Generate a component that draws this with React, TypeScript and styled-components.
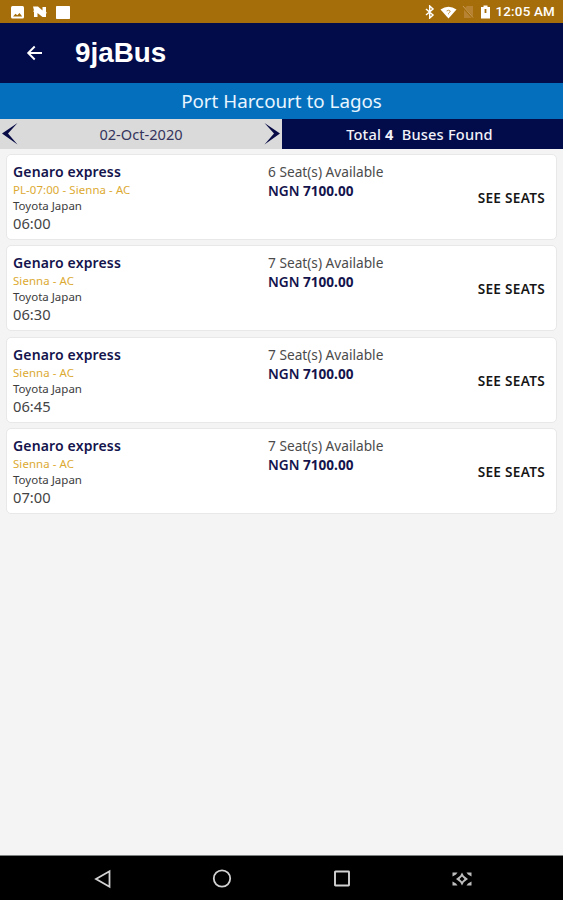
import styled, { createGlobalStyle } from 'styled-components';

const GlobalStyle = createGlobalStyle`
  * {
    box-sizing: border-box;
  }
  body {
    margin: 0;
    background: #f4f4f4;
    font-family: "Noto Sans", "Open Sans", sans-serif;
  }
  svg {
    display: block;
    flex: none;
  }
`

const Screen = styled.div`
  display: flex;
  flex-direction: column;
  width: 100%;
  height: 100vh;
  overflow: hidden;
`
const StatusBar = styled.div`
  display: flex;
  flex: none;
  justify-content: space-between;
  align-items: center;
  height: 23px;
  padding: 1px 8px 0 11px;
  background: #a66e0b;
  color: #fff;
`
const StatusLeft = styled.div`
  display: flex;
  align-items: center;
  gap: 9px;
`
const StatusRight = styled.div`
  display: flex;
  align-items: center;
`
const Clock = styled.span`
  margin-left: 6px;
  font: 500 13.4px/20px Roboto, sans-serif;
  letter-spacing: 0.2px;
  white-space: nowrap;
`
const AppBar = styled.header`
  display: flex;
  flex: none;
  align-items: center;
  height: 60px;
  padding-left: 26px;
  background: #020c4b;
`
const AppTitle = styled.h1`
  margin: 0 0 0 31px;
  color: #fff;
  font: bold 27.8px/32px "Liberation Sans", Arial, sans-serif;
`
const RouteBar = styled.div`
  flex: none;
  height: 36px;
  background: #0470bd;
  color: #e9f5ff;
  font-size: 18.8px;
  line-height: 36px;
  text-align: center;
`
const InfoBar = styled.div`
  display: flex;
  flex: none;
  height: 30px;
  font-size: 14.6px;
  line-height: 30px;
`
const DatePicker = styled.div`
  display: flex;
  justify-content: space-between;
  align-items: center;
  width: 282px;
  padding: 0 2px;
  background: #dadada;
  color: #34345c;
`
const ArrowButton = styled.button`
  padding: 0;
  border: 0;
  background: none;
`
const BusCount = styled.div`
  flex: 1;
  padding-right: 6px;
  background: #020c4b;
  color: #f2f2f8;
  font-weight: 500;
  letter-spacing: 0.2px;
  text-align: center;
  white-space: pre;
`
const BusList = styled.main`
  display: flex;
  flex: 1;
  flex-direction: column;
  gap: 5.4px;
  padding: 5px 6px 0;
`
const BusCard = styled.section`
  display: flex;
  height: 86px;
  padding: 8px 11px 0 6px;
  border: 1px solid #e8e8e8;
  border-radius: 5px;
  background: #fff;
`
const BusDetails = styled.div`
  width: 255px;
`
const BusName = styled.div`
  color: #14144d;
  font-size: 14px;
  font-weight: 600;
  letter-spacing: 0.15px;
  line-height: 18px;
`
const BusType = styled.div`
  color: #dcaa32;
  font-size: 11.4px;
  letter-spacing: 0.1px;
  line-height: 17px;
`
const BusModel = styled.div`
  color: #3c3c3c;
  font-size: 11.5px;
  line-height: 15px;
`
const Departure = styled.div`
  color: #444;
  font-size: 14.7px;
  line-height: 21px;
`
const Fare = styled.div`
  flex: 1;
`
const Seats = styled.div`
  color: #4b4b4b;
  font-size: 13.7px;
  line-height: 17px;
`
const Price = styled.div`
  margin-top: 1px;
  color: #14144d;
  font-size: 13.6px;
  font-weight: 600;
  line-height: 20px;

  b {
    font-weight: 700;
  }
`
const SeeSeats = styled.button`
  align-self: flex-start;
  margin-top: 25px;
  padding: 0;
  border: 0;
  background: none;
  color: #161616;
  font: 600 13.6px/20px "Noto Sans", "Open Sans", sans-serif;
  letter-spacing: 0.3px;
`
const NavBar = styled.nav`
  display: flex;
  flex: none;
  justify-content: center;
  align-items: center;
  gap: 100px;
  height: 45px;
  padding-top: 1px;
  border-top: 1px solid #7d817f;
  background: #000;
`

const buses = [
  { type: 'PL-07:00 - Sienna - AC', time: '06:00', seats: 6 },
  { type: 'Sienna - AC', time: '06:30', seats: 7 },
  { type: 'Sienna - AC', time: '06:45', seats: 7 },
  { type: 'Sienna - AC', time: '07:00', seats: 7 },
]

const StatusIcons = (): JSX.Element => (
  <>
    <svg width="15" height="14" viewBox="0 0 15 14" fill="none" stroke="#fff" strokeWidth="1.5">
      <path d="M1 4l7 6-3.300 3V1L8 4 1 10" />
    </svg>
    <svg width="17" height="13" viewBox="0 0 17 13">
      <path d="M.5 3.500Q8.500-2 16.500 3.500L8.500 12.500z" fill="#fff" />
      <path d="M6.600 5q2-1.500 3.700 0-.1 1.200-1.800 2.300v1" fill="none" stroke="#c69a50" />
    </svg>
    <svg width="24" height="14" viewBox="0 0 24 14">
      <path d="M7 4l3-3h6v12H7z" fill="#b78332" />
      <path d="M6 2l10 11" stroke="#a66e0b" strokeWidth="2" />
      <path d="M6 1l10 11.500" stroke="#c79c58" />
    </svg>
    <svg width="9" height="14" viewBox="0 0 9 14">
      <path d="M0 2h2.500V.5h4V2H9v11.500H0z" fill="#fff" />
      <path d="M4.500 4v4" stroke="#a66e0b" strokeWidth="1.800" />
    </svg>
  </>
)

const App = (): JSX.Element => {
  return (
    <Screen>
      <GlobalStyle />
      <StatusBar>
        <StatusLeft>
          <svg width="13" height="13" viewBox="0 0 13 13">
            <rect width="13" height="12.500" rx="1.500" fill="#fff" />
            <path d="M2 10.500l2.500-2.700 1.800 1.500L8.500 7l2.700 3.500z" fill="#a66e0b" />
          </svg>
          <svg width="14" height="12" viewBox="0 0 14 12" fill="#fff">
            <path d="M0 .5h5l4.500 4V1H13v5l1 1-1 .5V11H9.500L4.500 7v4H1V6L0 5l1-.5z" />
          </svg>
          <svg width="14" height="13" viewBox="0 0 14 13">
            <rect width="14" height="13" rx=".7" fill="#fff" />
          </svg>
        </StatusLeft>
        <StatusRight>
          <StatusIcons />
          <Clock>12:05 AM</Clock>
        </StatusRight>
      </StatusBar>
      <AppBar>
        <svg width="18" height="16" viewBox="0 0 18 16" fill="none" stroke="#fff" strokeWidth="1.900">
          <path d="M16 8H2.500M8.700 1.500L2.200 8l6.500 6.500" />
        </svg>
        <AppTitle>9jaBus</AppTitle>
      </AppBar>
      <RouteBar>Port Harcourt to Lagos</RouteBar>
      <InfoBar>
        <DatePicker>
          <ArrowButton aria-label="Previous day">
            <svg width="16" height="22" viewBox="0 0 16 22">
              <path d="M15.500 0L0 10.500l15.500 11L6 10.500z" fill="#080b45" />
            </svg>
          </ArrowButton>
          02-Oct-2020
          <ArrowButton aria-label="Next day">
            <svg width="16" height="22" viewBox="0 0 16 22">
              <path d="M.5 0L16 10.500 .5 21.500 10 10.500z" fill="#080b45" />
            </svg>
          </ArrowButton>
        </DatePicker>
        <BusCount>Total <b>4</b>{'  Buses Found'}</BusCount>
      </InfoBar>
      <BusList>
        {buses.map((bus) => (
          <BusCard key={bus.time}>
            <BusDetails>
              <BusName>Genaro express</BusName>
              <BusType>{bus.type}</BusType>
              <BusModel>Toyota Japan</BusModel>
              <Departure>{bus.time}</Departure>
            </BusDetails>
            <Fare>
              <Seats>{bus.seats} Seat(s) Available</Seats>
              <Price>NGN <b>7100.00</b></Price>
            </Fare>
            <SeeSeats>SEE SEATS</SeeSeats>
          </BusCard>
        ))}
      </BusList>
      <NavBar>
        <svg width="20" height="20" viewBox="0 0 20 20" fill="none" stroke="#d2d2d2" strokeWidth="1.800">
          <path d="M17.500 2.200v15.600L4 10z" />
        </svg>
        <svg width="20" height="20" viewBox="0 0 20 20" fill="none" stroke="#d2d2d2" strokeWidth="1.800">
          <circle cx="10" cy="9.500" r="8.200" />
        </svg>
        <svg width="20" height="20" viewBox="0 0 20 20" fill="none" stroke="#d2d2d2" strokeWidth="1.900">
          <rect x="3" y="2.500" width="14" height="14" rx=".5" />
        </svg>
        <svg width="20" height="20" viewBox="0 0 20 20" fill="#bdbdbd">
          <path d="M.5 3.500h5l-1.500 2-3.500 2zM19.500 3.500h-5l1.500 2 3.500 2zM.5 16.500h5l-1.500-2-3.500-2zM19.500 16.500h-5l1.500-2 3.500-2z" />
          <path d="M10 3.500l1.800 3.200L16 10l-4.200 3.300L10 16.500l-1.800-3.200L4 10l4.200-3.300zM10 7.500L7.500 10l2.500 2.500 2.500-2.500z" fillRule="evenodd" />
        </svg>
      </NavBar>
    </Screen>
  )
}

export default App;
